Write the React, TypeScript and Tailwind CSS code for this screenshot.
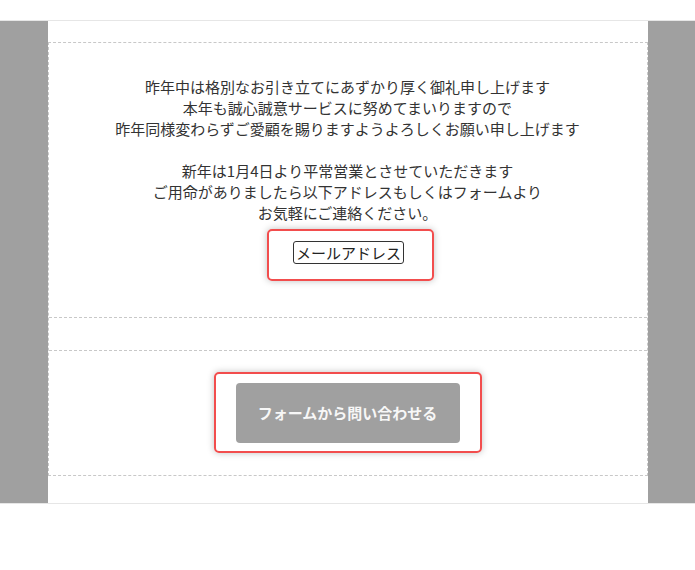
import React from 'react';

const greeting = [
  '昨年中は格別なお引き立てにあずかり厚く御礼申し上げます',
  '本年も誠心誠意サービスに努めてまいりますので',
  '昨年同様変わらずご愛顧を賜りますようよろしくお願い申し上げます',
  '',
  '新年は1月4日より平常営業とさせていただきます',
  'ご用命がありましたら以下アドレスもしくはフォームより',
  'お気軽にご連絡ください。',
];

export default function App() {
  return (
    <div
      className="min-h-[570px] bg-white pt-5 text-[#333]"
      style={{ fontFamily: '"Noto Sans CJK JP", "Noto Sans", sans-serif' }}
    >
      <div className="border-y border-[#e6e6e6] bg-[#a0a0a0]">
        <div className="mx-auto w-[600px] bg-white pt-[21px] pb-[27px]">
          <div className="border border-dashed border-[#c8c8c8]">
            {/* greeting + mail */}
            <div className="flex flex-col items-center pt-[33px] pb-[36px] text-center">
              <div className="text-[15px] leading-[21px]">
                {greeting.map((line, i) => (
                  <p key={i} className="h-[21px]">{line}</p>
                ))}
              </div>
              <div className="mt-[6px] ml-[6px] rounded-[5px] border-2 border-[#f24d4d] pt-[10px] pb-[15px] pl-[24px] pr-[28px] shadow-[0_0_7px_rgba(0,0,0,0.25)]">
                <span className="block rounded-[3px] border border-[#333] px-[2px] text-[15px] leading-[21px] text-[#222]">
                  メールアドレス
                </span>
              </div>
            </div>

            <div className="h-[33px] border-t border-dashed border-[#c8c8c8]" />

            {/* form button */}
            <div className="flex justify-center border-t border-dashed border-[#c8c8c8] pt-[21px] pb-[22px]">
              <div className="rounded-[5px] border-2 border-[#f24d4d] px-5 pt-[9px] pb-[8px] shadow-[0_0_7px_rgba(0,0,0,0.25)]">
                <div className="flex h-[60px] w-[224px] items-center justify-center rounded-[4px] bg-[#a0a0a0] text-[15px] font-semibold text-[#f7f7f7]">
                  フォームから問い合わせる
                </div>
              </div>
            </div>
          </div>
        </div>
      </div>
    </div>
  );
}
